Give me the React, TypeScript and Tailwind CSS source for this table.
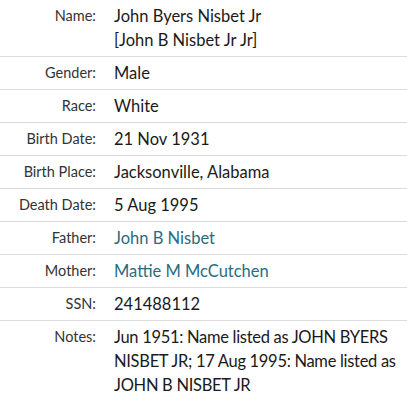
import React from 'react';

type Row = { label: string; value: React.ReactNode; link?: boolean; tight?: boolean };

const rows: Row[] = [
  {
    label: 'Name:',
    value: (
      <>
        <div>John Byers Nisbet Jr</div>
        <div>[John B Nisbet Jr Jr]</div>
      </>
    ),
  },
  { label: 'Gender:', value: 'Male' },
  { label: 'Race:', value: 'White' },
  { label: 'Birth Date:', value: '21 Nov 1931' },
  { label: 'Birth Place:', value: 'Jacksonville, Alabama' },
  { label: 'Death Date:', value: '5 Aug 1995' },
  { label: 'Father:', value: 'John B Nisbet', link: true },
  { label: 'Mother:', value: 'Mattie M McCutchen', link: true },
  { label: 'SSN:', value: '241488112' },
  {
    label: 'Notes:',
    value: 'Jun 1951: Name listed as JOHN BYERS NISBET JR; 17 Aug 1995: Name listed as JOHN B NISBET JR',
    tight: true,
  },
];

export default function App() {
  return (
    <div className="w-[407px] bg-white font-['Lato','Liberation_Sans',sans-serif]">
      {rows.map((row, i) => (
        <div
          key={row.label}
          className={`flex gap-[18px] py-1 ${i < rows.length - 1 ? 'border-b border-[#dcdcdc]' : ''}`}
        >
          <div className="w-[96px] shrink-0 text-right text-[14.5px] leading-6 text-[#333]">{row.label}</div>
          <div
            className={`flex-1 text-[16.5px] leading-6 ${row.tight ? 'tracking-[-0.3px]' : ''} ${
              row.link ? 'text-[#2b6b80]' : 'text-[#1a1a1a]'
            }`}
          >
            {row.value}
          </div>
        </div>
      ))}
    </div>
  );
}
